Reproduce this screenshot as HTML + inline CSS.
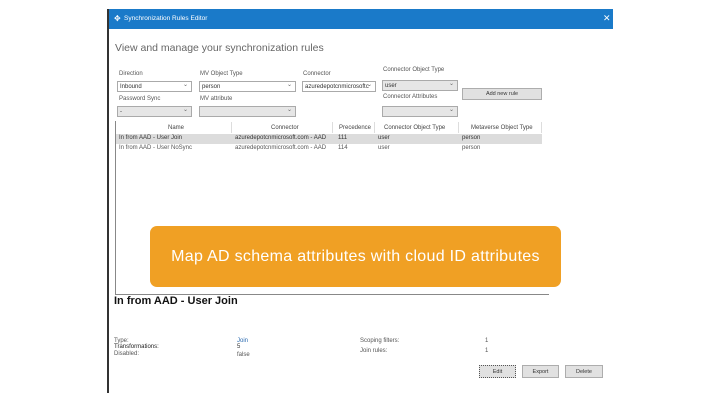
<!DOCTYPE html>
<html><head><meta charset="utf-8"><style>
*{margin:0;padding:0;box-sizing:border-box}
body{width:720px;height:405px;background:#fff;position:relative;overflow:hidden;font-family:"Liberation Sans",sans-serif;color:#333}
.a{position:absolute;white-space:nowrap}
.s{font-size:6px;color:#555}
.dd{position:absolute;height:11px;border:1px solid #aaa;background:#fff;font-size:6px;padding:2px 2px;color:#333}
.dd.g{background:#e6e6e6}
.dd:after{content:"⌄";position:absolute;right:3px;top:-1px;font-size:6px;color:#666}
.btn{position:absolute;background:#e1e1e1;border:1px solid #adadad;font-size:5.5px;text-align:center;color:#333}
</style></head><body>
<div class="a" style="left:107px;top:9px;width:506px;height:20px;background:#1a7ac9"></div>
<div class="a" style="left:114px;top:14px;font-size:8px;color:#fff">✥</div>
<div class="a" style="left:124px;top:15px;font-size:6.5px;color:#fff">Synchronization Rules Editor</div>
<div class="a" style="left:603px;top:13px;font-size:9px;color:#fff">✕</div>
<div class="a" style="left:107px;top:9px;width:2px;height:384px;background:#333"></div>
<div class="a" style="left:115px;top:42px;font-size:10.5px;color:#666">View and manage your synchronization rules</div>
<div class="a s" style="left:119px;top:71px">Direction</div>
<div class="a s" style="left:200px;top:71px">MV Object Type</div>
<div class="a s" style="left:303px;top:71px">Connector</div>
<div class="a s" style="left:383px;top:67px">Connector Object Type</div>
<div class="dd" style="left:117px;top:81px;width:75px">Inbound</div>
<div class="dd" style="left:199px;top:81px;width:97px">person</div>
<div class="dd" style="left:302px;top:81px;width:74px">azuredepotcnmicrosoftc</div>
<div class="dd g" style="left:382px;top:80px;width:76px">user</div>
<div class="btn" style="left:462px;top:88px;width:80px;height:12px;padding-top:2px">Add new rule</div>
<div class="a s" style="left:119px;top:96px">Password Sync</div>
<div class="a s" style="left:200px;top:96px">MV attribute</div>
<div class="a s" style="left:383px;top:94px">Connector Attributes</div>
<div class="dd g" style="left:117px;top:106px;width:75px">-</div>
<div class="dd g" style="left:199px;top:106px;width:97px"></div>
<div class="dd g" style="left:382px;top:106px;width:76px"></div>
<div class="a" style="left:115px;top:121px;width:434px;height:174px;border-left:1px solid #888;border-bottom:1px solid #888"></div>
<div class="a" style="left:116px;top:122px;width:425px;height:11px;font-size:6px;color:#444">
<span class="a" style="left:52px;top:3px">Name</span>
<span class="a" style="left:155px;top:3px">Connector</span>
<span class="a" style="left:223px;top:3px">Precedence</span>
<span class="a" style="left:268px;top:3px">Connector Object Type</span>
<span class="a" style="left:355px;top:3px">Metaverse Object Type</span>
<span class="a" style="left:115px;top:0;width:1px;height:11px;background:#ddd"></span>
<span class="a" style="left:216px;top:0;width:1px;height:11px;background:#ddd"></span>
<span class="a" style="left:258px;top:0;width:1px;height:11px;background:#ddd"></span>
<span class="a" style="left:342px;top:0;width:1px;height:11px;background:#ddd"></span>
<span class="a" style="left:425px;top:0;width:1px;height:11px;background:#ddd"></span>
</div>
<div class="a" style="left:116px;top:134px;width:426px;height:10px;background:#dcdcdc"></div>
<div class="a" style="left:116px;top:135px;font-size:6px;color:#333;width:430px">
<span class="a" style="left:3px">In from AAD - User Join</span><span class="a" style="left:119px">azuredepotcnmicrosoft.com - AAD</span><span class="a" style="left:222px">111</span><span class="a" style="left:262px">user</span><span class="a" style="left:346px">person</span></div>
<div class="a" style="left:116px;top:145px;font-size:6px;color:#555;width:430px">
<span class="a" style="left:3px">In from AAD - User NoSync</span><span class="a" style="left:119px">azuredepotcnmicrosoft.com - AAD</span><span class="a" style="left:222px">114</span><span class="a" style="left:262px">user</span><span class="a" style="left:346px">person</span></div>
<div class="a" style="left:150px;top:226px;width:411px;height:61px;background:#f0a024;border-radius:7px;color:#fff;font-size:16px;letter-spacing:0.3px;text-align:center;line-height:62px">Map AD schema attributes with cloud ID attributes</div>
<div class="a" style="left:114px;top:295px;font-size:11px;font-weight:bold;color:#111">In from AAD - User Join</div>
<div class="a s" style="left:114px;top:338px">Type:</div>
<div class="a" style="left:114px;top:344px;font-size:6px;color:#222">Transformations:</div>
<div class="a s" style="left:114px;top:351px">Disabled:</div>
<div class="a s" style="left:237px;top:338px;color:#2a6ab0">Join</div>
<div class="a" style="left:237px;top:344px;font-size:6px">5</div>
<div class="a s" style="left:237px;top:352px">false</div>
<div class="a s" style="left:360px;top:338px">Scoping filters:</div>
<div class="a s" style="left:360px;top:348px">Join rules:</div>
<div class="a s" style="left:485px;top:338px">1</div>
<div class="a s" style="left:485px;top:348px">1</div>
<div class="btn" style="left:479px;top:365px;width:37px;height:13px;padding-top:3px;border:1px dotted #555">Edit</div>
<div class="btn" style="left:522px;top:365px;width:37px;height:13px;padding-top:3px">Export</div>
<div class="btn" style="left:565px;top:365px;width:38px;height:13px;padding-top:3px">Delete</div>
</body></html>
